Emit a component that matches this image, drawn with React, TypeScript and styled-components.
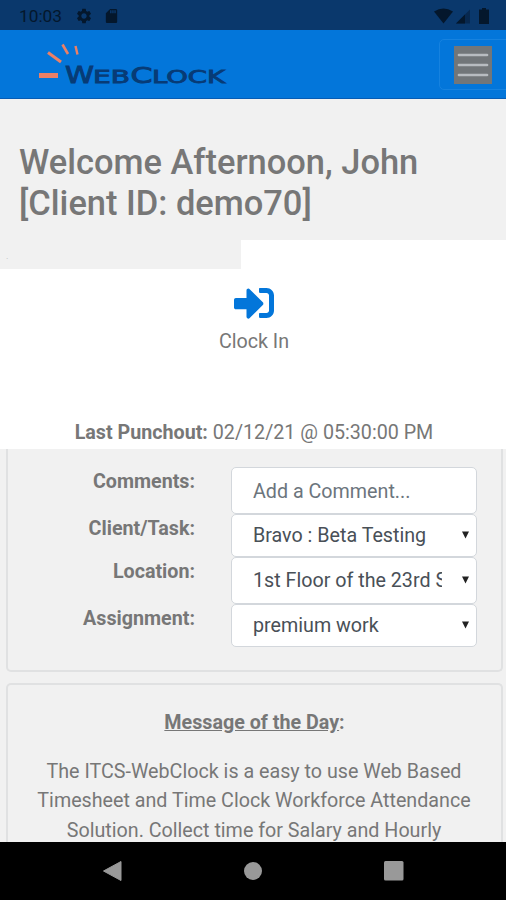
import React from 'react';
import styled, { createGlobalStyle } from 'styled-components';
import { FaSignInAlt } from 'react-icons/fa';
import { MdSettings, MdSdCard } from 'react-icons/md';

const GlobalStyle = createGlobalStyle`
  * { box-sizing: border-box; }
  body { margin: 0; background: #f1f1f1; }
`;

const Screen = styled.div`
  width: 506px;
  height: 900px;
  display: flex;
  flex-direction: column;
  overflow: hidden;
  background: #f1f1f1;
  color: #777;
  font-family: Roboto, sans-serif;
  font-size: 19.7px;
  line-height: 29.5px;
`;

const StatusBar = styled.div`
  height: 30px;
  flex: none;
  display: flex;
  align-items: center;
  justify-content: space-between;
  padding: 1px 15px 0 19px;
  background: #0a386c;
  color: #04172c;
`;

const StatusGroup = styled.div`
  display: flex;
  align-items: center;
`;

const Time = styled.span`
  width: 56px;
  font-size: 17.3px;
  line-height: 20px;
`;

const SettingsIcon = styled(MdSettings)`
  width: 18px;
  height: 18px;
  margin-right: 10px;
`;

const CardIcon = styled(MdSdCard)`
  width: 17px;
  height: 18px;
`;

const NavBar = styled.header`
  height: 69px;
  flex: none;
  display: flex;
  justify-content: space-between;
  align-items: flex-start;
  background: #0376da;
  border-bottom: 1px solid #075cb4;
`;

const LogoText = styled.text`
  font-family: 'DejaVu Sans', sans-serif;
  font-weight: 400;
  fill: #073b76;
  stroke: #073b76;
  stroke-width: 0.9px;
`;

const MenuButton = styled.button`
  width: 72px;
  height: 51px;
  margin: 9px -5px 0 0;
  padding: 6px 0 0 14px;
  display: flex;
  border: 1px solid #1682df;
  border-radius: 5px;
  background: transparent;
`;

const Greeting = styled.h1`
  height: 141px;
  flex: none;
  margin: 0;
  padding: 43px 19px 0;
  font-size: 34.45px;
  line-height: 41px;
  font-weight: 500;
`;

const Notch = styled.div`
  width: 241px;
  height: 29px;
  background: #f1f1f1;
  padding-left: 6px;
  font-size: 9px;
  line-height: 32px;
  color: #bbb;
`;

const PunchPanel = styled.section`
  height: 209px;
  flex: none;
  display: flex;
  flex-direction: column;
  background: #fff;
`;

const ClockIn = styled.button`
  align-self: center;
  display: flex;
  flex-direction: column;
  align-items: center;
  margin: 14px 0 0 2px;
  padding: 0;
  border: 0;
  background: none;
  color: #777;
  font: inherit;
`;

const ClockInIcon = styled(FaSignInAlt)`
  width: 40px;
  height: 40px;
  margin-bottom: 4px;
  color: #0376da;
`;

const LastPunch = styled.p`
  margin: 61px 0 0;
  padding-left: 2px;
  text-align: center;
`;

const FormCard = styled.section`
  height: 223px;
  flex: none;
  margin: 0 3px 0 6px;
  padding: 18px 26px 0 0;
  border: 2px solid #e0e1e2;
  border-top: 0;
  border-radius: 0 0 5px 5px;
`;

const FieldRow = styled.div<{ $height: number }>`
  height: ${(p) => p.$height}px;
  display: grid;
  grid-template-columns: 187px 246px;
  column-gap: 36px;
`;

const Label = styled.label`
  text-align: right;
  font-weight: 700;
`;

const Control = styled.div<{ $muted?: boolean }>`
  display: flex;
  align-items: center;
  justify-content: space-between;
  padding: ${(p) => (p.$muted ? '2px' : '0')} 6px 0 21px;
  border: 1.5px solid #d3d7dc;
  border-radius: 5px;
  background: #fff;
  color: ${(p) => (p.$muted ? '#6c757d' : '#495057')};
`;

const Value = styled.span`
  width: 189px;
  overflow: hidden;
  white-space: nowrap;
`;

const MessageCard = styled.section`
  flex: 1;
  min-height: 0;
  overflow: hidden;
  margin: 11px 3px 0 6px;
  padding: 23px 18px 0;
  border: 2px solid #e0e1e2;
  border-bottom: 0;
  border-radius: 5px 5px 0 0;
  text-align: center;
`;

const MessageTitle = styled.h2`
  margin: 0 0 19px;
  font-size: inherit;
  font-weight: 700;
  line-height: inherit;
`;

const MessageText = styled.p`
  margin: 0;
  padding-right: 1px;
  white-space: nowrap;
`;

const SystemNav = styled.nav`
  height: 58px;
  flex: none;
  display: flex;
  align-items: center;
  justify-content: space-between;
  padding: 0 102px;
  background: #000;
`;

const Logo = () => (
  <svg width="240" height="68" viewBox="0 30 240 68" role="img" aria-label="WebClock">
    <g stroke="#ec8066" fill="none">
      <path d="M39 75.5H58" strokeWidth="5" />
      <path d="M48 52.5L61 62" strokeWidth="3" />
      <path d="M62.5 44.5L68 54" strokeWidth="2.6" />
      <path d="M75.5 46L77.5 54.5" strokeWidth="2.4" />
    </g>
    <LogoText x="65" y="82.5" fontSize="22.5" textLength="29" lengthAdjust="spacingAndGlyphs">W</LogoText>
    <LogoText x="93" y="82.5" fontSize="18.5" textLength="37" lengthAdjust="spacingAndGlyphs">EB</LogoText>
    <LogoText x="130.5" y="82.5" fontSize="22" textLength="22" lengthAdjust="spacingAndGlyphs">C</LogoText>
    <LogoText x="152" y="82.5" fontSize="18.5" textLength="73" lengthAdjust="spacingAndGlyphs">LOCK</LogoText>
  </svg>
);

const Signals = () => (
  <svg width="58" height="18" viewBox="433 6 58 18" fill="#04172c">
    <path d="M434 10.500Q443.500 4.500 453 10.500L443.500 22.500Z" />
    <path d="M456 22.500L470 8.500V22.500Z" opacity="0.45" />
    <path d="M456 22.500L465 13.500V22.500Z" />
    <path d="M482 7H486V8.500H489V23H479V8.500H482Z" />
  </svg>
);

const MenuIcon = () => (
  <svg width="38" height="38" viewBox="0 0 38 38">
    <rect width="38" height="38" fill="#727679" />
    <path d="M5 9H33M5 19H33M5 29H33" stroke="#b8bcc0" strokeWidth="2.700" strokeLinecap="round" />
  </svg>
);

const Arrow = () => (
  <svg width="9" height="9" viewBox="0 0 9 9">
    <path d="M1 0.500H8L4.500 7.500Z" fill="#222" />
  </svg>
);

const fields = [
  { label: 'Comments:', value: 'Add a Comment...', height: 47, select: false },
  { label: 'Client/Task:', value: 'Bravo : Beta Testing', height: 43, select: true },
  { label: 'Location:', value: '1st Floor of the 23rd S', height: 47, select: true },
  { label: 'Assignment:', value: 'premium work', height: 43, select: true },
];

export default function App() {
  return (
    <>
      <GlobalStyle />
      <Screen>
        <StatusBar>
          <StatusGroup>
            <Time>10:03</Time>
            <SettingsIcon />
            <CardIcon />
          </StatusGroup>
          <Signals />
        </StatusBar>
        <NavBar>
          <Logo />
          <MenuButton aria-label="Menu">
            <MenuIcon />
          </MenuButton>
        </NavBar>
        <Greeting>
          Welcome Afternoon, John
          <br />
          [Client ID: demo70]
        </Greeting>
        <PunchPanel>
          <Notch>.</Notch>
          <ClockIn>
            <ClockInIcon />
            Clock In
          </ClockIn>
          <LastPunch>
            <b>Last Punchout:</b> 02/12/21 @ 05:30:00 PM
          </LastPunch>
        </PunchPanel>
        <FormCard>
          {fields.map((f) => (
            <FieldRow key={f.label} $height={f.height}>
              <Label>{f.label}</Label>
              <Control $muted={!f.select}>
                <Value>{f.value}</Value>
                {f.select && <Arrow />}
              </Control>
            </FieldRow>
          ))}
        </FormCard>
        <MessageCard>
          <MessageTitle>
            <u>Message of the Day</u>:
          </MessageTitle>
          <MessageText>
            The ITCS-WebClock is a easy to use Web Based
            <br />
            Timesheet and Time Clock Workforce Attendance
            <br />
            Solution. Collect time for Salary and Hourly
          </MessageText>
        </MessageCard>
        <SystemNav>
          <svg width="20" height="22" viewBox="0 0 20 22">
            <path d="M1.500 11L19 1.500V20.500Z" fill="#999" stroke="#999" strokeLinejoin="round" />
          </svg>
          <svg width="18" height="18" viewBox="0 0 18 18">
            <circle cx="9" cy="9" r="9" fill="#999" />
          </svg>
          <svg width="20" height="20" viewBox="0 0 20 20">
            <rect width="19.500" height="19.500" rx="1.500" fill="#999" />
          </svg>
        </SystemNav>
      </Screen>
    </>
  );
}
